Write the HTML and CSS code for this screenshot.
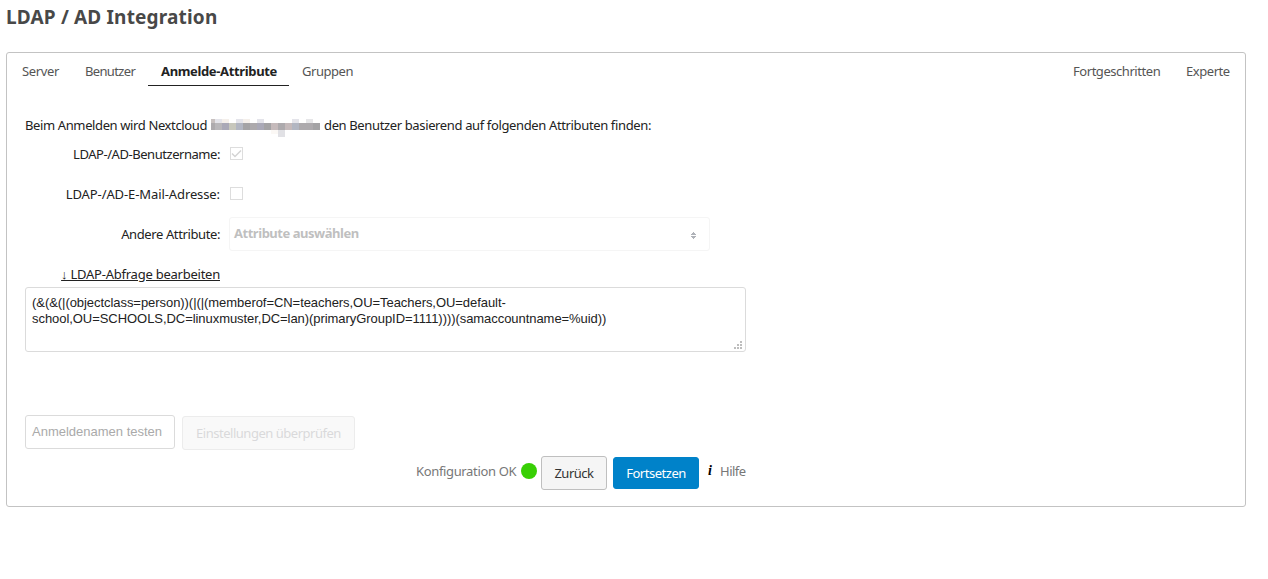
FILE: index.html
```html
<!DOCTYPE html>
<html lang="de">
<head>
<meta charset="utf-8">
<title>LDAP / AD Integration</title>
<link rel="stylesheet" href="styles.css">
</head>
<body>
<h2 class="title"><span class="title-text">LDAP / AD Integration</span></h2>
<main class="panel">
  <nav class="tabs">
    <a class="tab tab-server">Server</a>
    <a class="tab tab-users">Benutzer</a>
    <a class="tab tab-active">Anmelde-Attribute</a>
    <a class="tab tab-groups">Gruppen</a>
    <a class="tab tab-advanced">Fortgeschritten</a>
    <a class="tab tab-expert">Experte</a>
  </nav>
  <section class="content">
    <p class="intro"><span class="intro-start">Beim Anmelden wird Nextcloud</span>
      <svg class="redacted" width="109" height="18" viewBox="0 0 109 18" shape-rendering="crispEdges">
        <path fill="#adaaad" d="M0 4h109v7H0z"/>
        <path fill="#c8c1c0" d="M0 0h4v4H0z"/><path fill="#e4e4ea" d="M4 0h7v4H4zM25 0h7v4h-7zM46 0h7v4h-7zM81 0h7v4h-7z"/>
        <path fill="#f4efea" d="M11 0h7v4h-7zM32 0h7v4h-7z"/><path fill="#e6e6e8" d="M95 0h7v4h-7z"/>
        <path fill="#b9b7ba" d="M4 4h7v7H4z"/><path fill="#aaa9b7" d="M11 4h7v7h-7zM46 4h7v7h-7z"/>
        <path fill="#c7c7bc" d="M18 4h7v7h-7z"/><path fill="#b2b6c2" d="M25 4h7v7h-7zM81 4h7v7h-7z"/>
        <path fill="#c5babb" d="M60 4h7v7h-7zM74 4h7v7h-7z"/><path fill="#a4a3a5" d="M32 4h7v7h-7zM53 4h7v7h-7zM102 4h7v7h-7z"/>
        <path fill="#e1e1e5" d="M67 11h7v7h-7z"/><path fill="#fbf8f5" d="M60 11h7v4h-7z"/>
      </svg>
      <span class="intro-end">den Benutzer basierend auf folgenden Attributen finden:</span></p>
    <div class="row"><span class="label"><span class="t-user">LDAP-/AD-Benutzername:</span></span>
      <span class="check"><svg width="11" height="11" viewBox="0 0 11 11"><path d="M1 5.5l3 3L10 2.5" fill="none" stroke="#d4d4d4" stroke-width="1.5"/></svg></span></div>
    <div class="row"><span class="label"><span class="t-mail">LDAP-/AD-E-Mail-Adresse:</span></span><span class="check"></span></div>
    <div class="row"><span class="label"><span class="t-attr">Andere Attribute:</span></span>
      <span class="select"><span class="t-select">Attribute auswählen</span>
        <svg width="5" height="7" viewBox="0 0 5 7" shape-rendering="crispEdges"><path fill="#afb2b8" d="M2 0h1v1h1v1h1v1H0V2h1V1h1zM0 4h5v1H4v1H3v1H2V6H1V5H0z"/></svg></span></div>
    <div class="row row-edit"><a class="label edit"><span class="t-edit">↓ LDAP-Abfrage bearbeiten</span></a></div>
    <div class="query"><div class="q1">(&amp;(&amp;(|(objectclass=person))(|(|(memberof=CN=teachers,OU=Teachers,OU=default-</div><div class="q2">school,OU=SCHOOLS,DC=linuxmuster,DC=lan)(primaryGroupID=1111))))(samaccountname=%uid))</div>
      <svg class="grip" width="8" height="8" viewBox="0 0 8 8" shape-rendering="crispEdges"><path fill="#bdbdbd" d="M6 0h2v2H6zM3 3h2v2H3zM6 3h2v2H6zM0 6h2v2H0zM3 6h2v2H3zM6 6h2v2H6z"/></svg>
    </div>
    <div class="test"><div class="input"><span class="t-test">Anmeldenamen testen</span></div><div class="button verify"><span class="t-verify">Einstellungen überprüfen</span></div></div>
    <div class="actions"><span class="muted t-config">Konfiguration OK</span><i class="status"></i><div class="button back"><span class="t-back">Zurück</span></div><div class="button next"><span class="t-next">Fortsetzen</span></div><span class="info">i</span><span class="muted t-help">Hilfe</span></div>
  </section>
</main>
</body>
</html>
```
FILE: styles.css
```css
* { box-sizing: border-box; }
body { margin: 0; height: 579px; overflow: hidden; background: #fff; color: #222; font: 13px/20px "Noto Sans", "Open Sans", sans-serif; white-space: nowrap; }
.title { margin: 0; height: 52px; padding: 4px 0 0 6px; font-size: 19px; line-height: 26px; letter-spacing: 0.17px; color: #484848; }
.panel { width: 1240px; height: 455px; margin-left: 6px; border: 1px solid #c3c3c3; border-radius: 3px; }
.tabs { display: flex; height: 33px; padding: 4px 14px 0 15px; color: #555; }
.tab { height: 29px; padding-top: 4px; letter-spacing: -0.45px; }
.tab-server { width: 63px; letter-spacing: -0.33px; }
.tab-users { width: 63px; letter-spacing: -0.65px; }
.tab-active { width: 141px; padding-left: 13px; border-bottom: 1px solid #222; font-weight: bold; letter-spacing: -0.35px; color: #222; }
.tab-groups { margin-left: 13px; }
.tab-advanced { width: 88px; margin-left: auto; }
.tab-expert { width: 45px; margin-left: 25px; }
.content { padding: 29px 18px 0; width: 757px; }
.intro { display: flex; height: 20px; margin: 0 0 9px; }
.intro > * { flex-shrink: 0; }
.intro-start { width: 186px; letter-spacing: -0.38px; }
.redacted { margin-top: 4px; }
.intro-end { margin-left: 4px; letter-spacing: -0.365px; }
.row { display: flex; height: 40px; }
.label { width: 195px; display: flex; justify-content: flex-end; }
.t-user { letter-spacing: -0.45px; }
.t-mail { letter-spacing: -0.1px; }
.t-attr { letter-spacing: -0.39px; }
.t-edit { letter-spacing: -0.24px; }
.t-select { letter-spacing: -0.47px; }
.check { width: 13px; height: 13px; margin: 3px 0 0 10px; border: 1px solid #ddd; display: flex; }
.select { width: 481px; height: 34px; margin: -7px 0 0 9px; padding: 0 13px 2px 4px; border: 1px solid #f5f5f5; border-radius: 3px; display: flex; align-items: center; justify-content: space-between; color: #bfbfbf; font-weight: bold; }
.select svg { margin-top: 5px; }
.row-edit { height: 23px; }
.edit { text-decoration: underline; }
.query { position: relative; width: 721px; height: 65px; padding: 7px 6px; border: 1px solid #dbdbdb; border-radius: 3px; font: 13px/16px "Liberation Sans", sans-serif; letter-spacing: -0.055px; }
.q1, .q2 { width: max-content; }
.grip { position: absolute; right: 3px; bottom: 2px; }
.test { display: flex; margin-top: 63px; gap: 7px; }
.input { width: 150px; height: 34px; border: 1px solid #dbdbdb; border-radius: 3px; padding: 6px; font-family: "Liberation Sans", sans-serif; color: #aaa; }
.button { display: flex; justify-content: center; align-items: center; border: 1px solid #bfbfbf; border-radius: 3px; background: #f5f5f5; color: #333; letter-spacing: -0.48px; }
.verify { width: 173px; height: 34px; margin-top: 1px; border-color: #ececec; background: #f9f9f9; color: #d9d9db; }
.actions { display: flex; margin: 6px 0 0 391px; height: 34px; }
.actions > * { flex-shrink: 0; }
.muted { color: #777; padding-top: 5px; letter-spacing: -0.35px; }
.t-config { width: 105px; }
.t-help { letter-spacing: -0.5px; }
.status { width: 16px; height: 16px; margin-top: 7px; border-radius: 50%; background: #38cf05; }
.back { width: 66px; height: 34px; margin-left: 4px; }
.next { width: 86px; height: 32px; margin: 1px 0 0 6px; border-color: #0082c9; background: #0082c9; color: #fff; }
.info { width: 12px; margin: 5px 0 0 9px; font: italic bold 14px/20px "Liberation Serif", serif; color: #000; }
```
